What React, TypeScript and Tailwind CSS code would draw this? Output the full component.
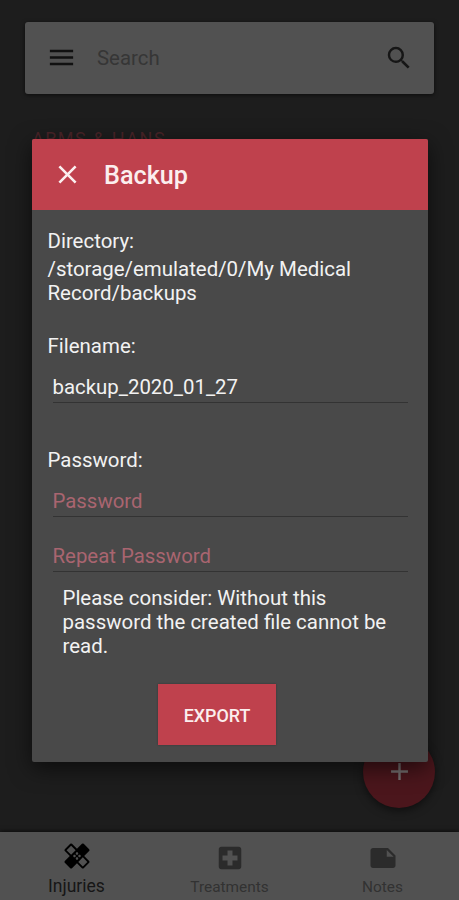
import { useState } from "react";
import clsx from "clsx";
import {
  MdAdd,
  MdClose,
  MdHealing,
  MdLocalHospital,
  MdMenu,
  MdNote,
  MdSearch,
} from "react-icons/md";

const tabs = [
  { label: "Injuries", icon: MdHealing },
  { label: "Treatments", icon: MdLocalHospital },
  { label: "Notes", icon: MdNote },
];

function SearchBar() {
  return (
    <div className="mx-[25px] mt-[21.5px] flex h-[72px] items-center rounded-[3px] bg-[#515151] px-5 shadow-[0_1px_4px_rgba(0,0,0,0.6)]">
      <MdMenu className="ml-[0.5px] size-[31px] text-[#111]" />
      <span className="ml-[20.5px] flex-1 pt-[2px] text-[20.4px] text-[#363636]">Search</span>
      <MdSearch className="size-[30px] text-[#161616]" />
    </div>
  );
}

function BottomNav({ active }: { active: string }) {
  return (
    <nav className="grid h-[68px] grid-cols-3 bg-[#515151] shadow-[0_-1px_4px_rgba(0,0,0,0.6)]">
      {tabs.map(({ label, icon: Icon }) => (
        <div
          key={label}
          className={clsx(
            "flex flex-col items-center",
            label === active ? "pt-[9px] text-black" : "pt-[11px] text-[#2b2b2b]"
          )}
        >
          <Icon className="size-[30px]" />
          <span
            className={clsx(
              "mt-[4px] whitespace-nowrap",
              label === active
                ? "text-[17.5px] leading-[22px] text-[#161616]"
                : "text-[15.4px] leading-[20px] text-[#323232]"
            )}
          >
            {label}
          </span>
        </div>
      ))}
    </nav>
  );
}

function BackupDialog() {
  const [filename, setFilename] = useState("backup_2020_01_27");
  const [password, setPassword] = useState("");
  const [repeat, setRepeat] = useState("");

  const field =
    "mx-[5px] block h-[35px] w-[355.5px] border-b border-[#333] bg-transparent pt-[3px] text-[20.4px] text-[#f2f2f2] outline-none placeholder:text-[#a96570] placeholder:opacity-100";

  return (
    <div className="absolute left-[32px] top-[138.5px] flex h-[623px] w-[396px] flex-col overflow-hidden rounded-[2px] bg-[#494949] text-[20.45px] leading-[24px] text-[#f2f2f2] shadow-[0_6px_22px_rgba(0,0,0,0.6)]">
      <header className="flex h-[71.5px] shrink-0 items-center bg-[#bf414d] pl-[20px] text-[#fbeeee]">
        <MdClose className="size-[31px]" />
        <h1 className="ml-[21px] pt-[3px] text-[25.2px] font-medium">Backup</h1>
      </header>

      <div className="flex flex-col px-[15.5px] pt-[19px]">
        <p>Directory:</p>
        <p className="mt-[4px]">
          /storage/emulated/0/My Medical
          <br />
          Record/backups
        </p>

        <label className="mt-[29px]">Filename:</label>
        <input
          className={clsx(field, "mt-[10px]")}
          value={filename}
          onChange={(e) => setFilename(e.target.value)}
        />

        <label className="mt-[45px]">Password:</label>
        <input
          type="password"
          placeholder="Password"
          className={clsx(field, "mt-[10px]")}
          value={password}
          onChange={(e) => setPassword(e.target.value)}
        />
        <input
          type="password"
          placeholder="Repeat Password"
          className={clsx(field, "mt-[20px]")}
          value={repeat}
          onChange={(e) => setRepeat(e.target.value)}
        />

        <p className="ml-[15px] mt-[14px]">
          Please consider: Without this
          <br />
          password the created file cannot be
          <br />
          read.
        </p>
      </div>

      <button className="ml-[126px] mt-[26px] h-[61px] w-[118px] bg-[#bf414d] pt-[3px] text-[17.9px] font-medium text-[#fbeeee] shadow-[0_0_2px_rgba(0,0,0,0.3)]">
        EXPORT
      </button>
    </div>
  );
}

export default function App() {
  return (
    <div className="relative flex h-[900px] w-[459px] flex-col overflow-hidden bg-[#1d1d1d] font-['Roboto',sans-serif]">
      <SearchBar />
      <main className="flex-1 px-[32px] pt-[33px]">
        <h2 className="text-[18px] leading-[24px] tracking-[1.5px] text-[#4a2428]">
          ARMS &amp; HANS
        </h2>
      </main>

      <button className="absolute left-[363px] top-[736px] flex size-[72px] items-center justify-center rounded-full bg-[#4b161c] pb-[2px] shadow-[0_3px_8px_rgba(0,0,0,0.5)]">
        <MdAdd className="size-[29px] text-[#767070]" />
      </button>

      <BottomNav active="Injuries" />
      <BackupDialog />
    </div>
  );
}
